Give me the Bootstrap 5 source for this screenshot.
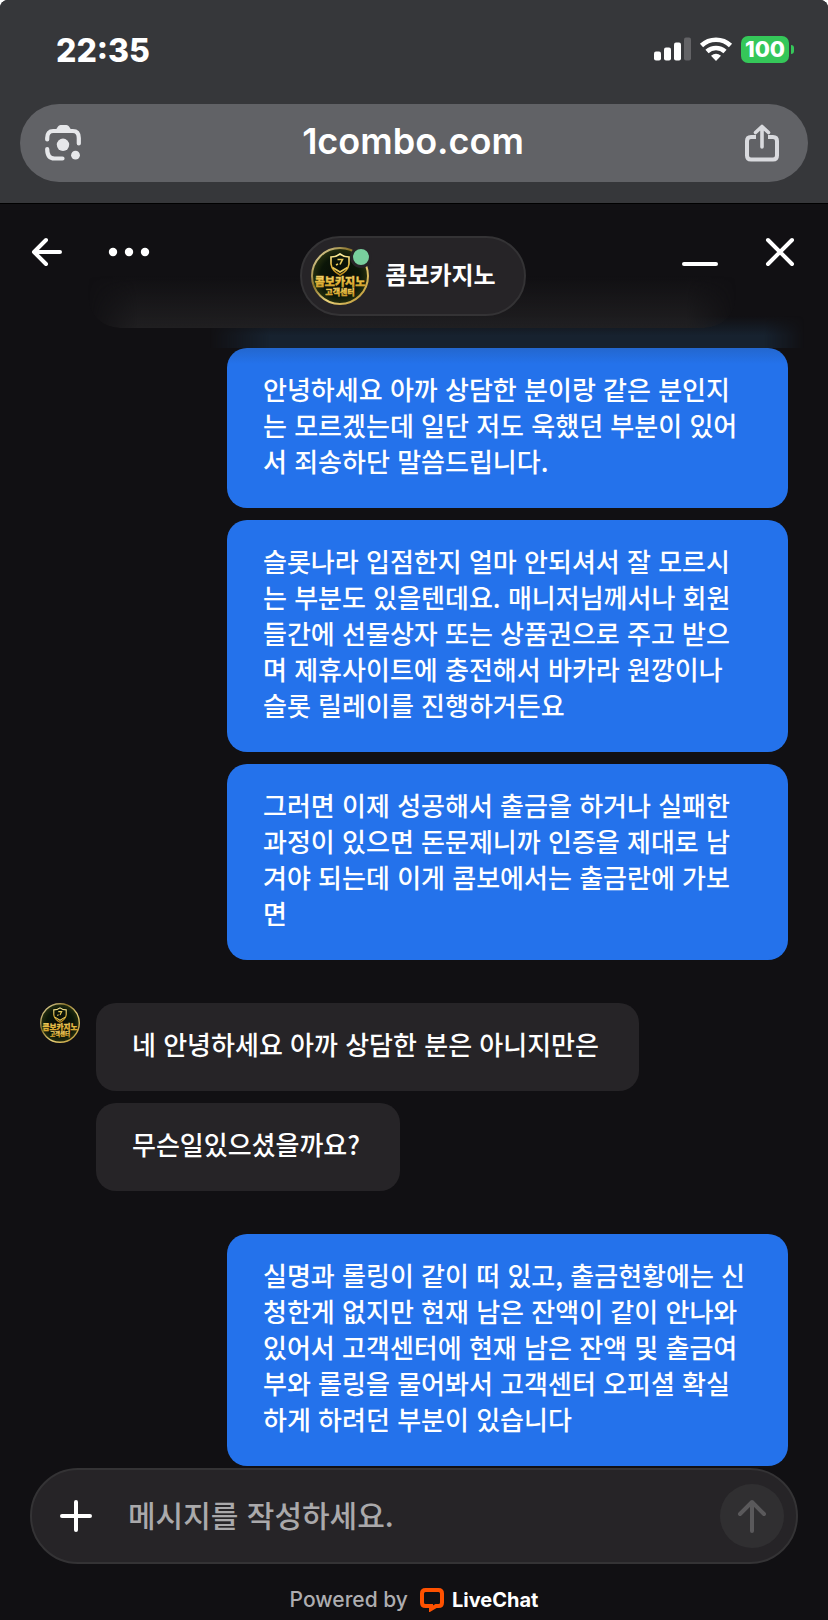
<!DOCTYPE html>
<html lang="ko">
<head>
<meta charset="utf-8">
<meta name="viewport" content="width=device-width, initial-scale=1">
<title>콤보카지노 상담</title>
<link href="https://cdn.jsdelivr.net/npm/bootstrap@5.3.0/dist/css/bootstrap.min.css" rel="stylesheet">
<script src="https://cdn.jsdelivr.net/npm/bootstrap@5.3.0/dist/js/bootstrap.bundle.min.js" defer></script>
<style>
  :root { --ink: #111013; --panel: #262427; --line: #343335; --chrome: #36373a; --blue: #2472eb; }
  body { background: #fff; color: #fff; font-family: "Noto Sans CJK KR", "Noto Sans", sans-serif; }
  .screen { background: var(--ink); border-radius: 8px 8px 0 0; overflow: hidden; }
  .latin { font-family: Inter, "Noto Sans CJK KR", sans-serif; }
  .icon-btn { padding: 0; border: 0; background: none; color: inherit; display: flex; }
  svg { display: block; flex: none; }

  .browser-bar { background: var(--chrome); border-bottom: 1px solid #000; padding: 0 20px 21px; }
  .status-row { height: 104px; padding: 0 14px 6px 36px; }
  .clock { font-size: 32px; font-weight: 800; line-height: 40px; padding-top: 4px; }
  .battery { background: #35c759; border-radius: 7px; width: 48px; height: 27px; font-size: 22px; font-weight: 800; line-height: 27px; text-align: center; }
  .battery-tip { width: 3px; height: 9px; background: #35c759; border-radius: 0 4px 4px 0; margin-left: 2px; }
  .address { background: #616266; height: 78px; border-radius: 39px; padding: 0 28px 0 24px; }
  .address-url { color: #fff; font-size: 36px; font-weight: 600; line-height: 44px; padding-bottom: 4px; }

  .chat-head { height: 144px; padding: 32px 32px 0 30px; isolation: isolate; display: grid; grid-template-columns: 1fr auto 1fr; align-items: start; }
  .head-tools { height: 32px; gap: 46px; }
  .agent-pill { background: var(--panel); border: 2px solid var(--line); border-radius: 40px; height: 80px; padding: 0 28px 0 9px; gap: 16px; }
  .agent-name { font-size: 24px; font-weight: 700; line-height: 36px; padding-bottom: 4px; }
  .presence { top: -1px; right: -3px; width: 22px; height: 22px; border: 3px solid var(--panel); border-radius: 50%; background: #78cf9d; }
  .faded-bubble { z-index: -1; left: 88px; right: 92px; bottom: 20px; height: 52px; border-radius: 0 0 32px 32px; background: linear-gradient(transparent, #201f21);
    -webkit-mask-image: linear-gradient(90deg, transparent, #000 50px, #000 calc(100% - 50px), transparent); mask-image: linear-gradient(90deg, transparent, #000 50px, #000 calc(100% - 50px), transparent); }
  .blue-haze { z-index: -2; left: 210px; right: 24px; bottom: 0; height: 32px; background: linear-gradient(transparent, #17222f 60%);
    -webkit-mask-image: linear-gradient(90deg, transparent, #000 60px, #000 calc(100% - 40px), transparent); mask-image: linear-gradient(90deg, transparent, #000 60px, #000 calc(100% - 40px), transparent); }

  .thread { padding: 0 40px 2px; gap: 43px; }
  .turn { gap: 12px; }
  .bubble { border-radius: 20px; padding: 23px 40px 29px 36px; font-size: 26px; font-weight: 500; line-height: 36px; word-break: break-all; }
  .bubble-out { background: var(--blue); width: 75%; }
  .bubble-first { background: linear-gradient(#2367cf, var(--blue) 16px); }
  .bubble-in { background: var(--panel); }

  .composer { margin: 0 30px; background: var(--panel); border: 2px solid var(--line); border-radius: 48px; height: 96px; padding: 0 12px 0 28px; }
  .composer-input { background: none; border: 0; outline: 0; color: #fff; font-size: 30px; font-weight: 500; line-height: 44px; padding: 0 0 4px; margin: 0 24px 0 36px; min-width: 0; }
  .composer-input::placeholder { color: #aaa9ab; opacity: 1; }
  .send-btn { width: 64px; height: 64px; border-radius: 50%; background: #302f31; color: #5a595b; align-items: center; justify-content: center; }
  .powered { height: 56px; padding-top: 16px; gap: 12px; color: #aeadb0; font-size: 21px; font-weight: 500; line-height: 24px; }
  .powered-brand { color: #fff; text-decoration: none; gap: 8px; font-size: 20px; font-weight: 700; }
</style>
</head>
<body>
<svg width="0" height="0" class="position-absolute" aria-hidden="true">
  <defs>
    <linearGradient id="gold" x1="0" y1="0" x2="0" y2="1"><stop offset="0" stop-color="#fff0a0"/><stop offset=".55" stop-color="#e5b83c"/><stop offset="1" stop-color="#b98518"/></linearGradient>
    <linearGradient id="ring" x1="0" y1="0" x2="1" y2="1"><stop offset="0" stop-color="#f7edb9"/><stop offset=".35" stop-color="#8a7229"/><stop offset=".6" stop-color="#e9d27c"/><stop offset="1" stop-color="#b58d28"/></linearGradient>
    <radialGradient id="felt"><stop offset="0" stop-color="#080b06"/><stop offset=".7" stop-color="#0b1608"/><stop offset="1" stop-color="#26300f"/></radialGradient>
    <symbol id="crest" viewBox="0 0 58 58">
      <circle cx="29" cy="29" r="28" fill="url(#felt)" stroke="url(#ring)" stroke-width="2"/>
      <path d="M29 7 Q33 10 38 10 V17 Q37 24 29 28 Q21 24 20 17 V10 Q25 10 29 7Z" fill="none" stroke="url(#gold)" stroke-width="1.6"/>
      <path d="M21.500 20.500l7.500 4.500 7.500-4.500M26.500 12.500l5 0-2.500 5M25 18l2-1" fill="none" stroke="#e8ca59" stroke-width="1.6"/>
      <text x="29" y="39" text-anchor="middle" font-size="11" font-weight="900" fill="url(#gold)" stroke="#e5b83c" stroke-width=".4">콤보카지노</text>
      <text x="29" y="48" text-anchor="middle" font-size="8" font-weight="900" fill="url(#gold)" stroke="#e5b83c" stroke-width=".3">고객센터</text>
    </symbol>
  </defs>
</svg>

<div class="screen min-vh-100 d-flex flex-column">
  <header class="browser-bar latin">
    <div class="status-row d-flex align-items-center justify-content-between">
      <span class="clock">22:35</span>
      <div class="d-flex align-items-center">
        <svg width="37" height="24" viewBox="0 0 37 24" fill="#fff" aria-hidden="true"><rect y="14.5" width="7" height="9" rx="2"/><rect x="10" y="10.500" width="7" height="13" rx="2"/><rect x="20" y="5.500" width="7" height="18" rx="2"/><rect x="30" y=".5" width="7" height="23" rx="2" fill="#636366"/></svg>
        <svg class="ms-2 me-1" width="34" height="26" viewBox="0 0 34 26" aria-hidden="true"><g fill="none" stroke="#fff" stroke-width="4.600"><path d="M2.500 9.500C10.500 1.800 23.500 1.800 31.500 9.500"/><path d="M8 15.500C13 10.800 21 10.800 26 15.500"/></g><path d="M17 25l-5-5.200q5-4 10 0z" fill="#fff"/></svg>
        <span class="battery ms-1">100</span><span class="battery-tip"></span>
      </div>
    </div>
    <div class="address d-flex align-items-center justify-content-between">
      <button class="icon-btn" type="button" aria-label="렌즈 검색">
        <svg width="38" height="38" viewBox="0 0 38 38"><g fill="none" stroke="#e6e7ea" stroke-width="4.200" stroke-linecap="round"><path d="M3.200 15.500V14Q3.200 7 9.200 7H28.800Q34.800 7 34.800 14V19.500"/><path d="M3.200 25Q3.200 34.500 10.500 34.500H18.500"/></g><path d="M11 7l3-4.500q.8-1.500 2.500-1.500h6q1.700 0 2.500 1.500l3 4.500z" fill="#e6e7ea"/><circle cx="19" cy="20.800" r="6.200" fill="#e6e7ea"/><circle cx="31.500" cy="31.200" r="4.400" fill="#e6e7ea"/></svg>
      </button>
      <span class="address-url">1combo.com</span>
      <button class="icon-btn" type="button" aria-label="공유">
        <svg width="36" height="38" viewBox="0 0 36 38" fill="none" stroke="#d9dade" stroke-width="4" stroke-linecap="round" stroke-linejoin="round"><path d="M12 13H7Q3 13 3 17V31.500Q3 35.500 7 35.500H29Q33 35.500 33 31.500V17Q33 13 29 13H24" stroke-linecap="butt"/><path d="M18 23V3M11.500 8.500L18 2.500L24.500 8.500" stroke-width="3.600"/></svg>
      </button>
    </div>
  </header>

  <section class="chat-head position-relative">
    <div class="faded-bubble position-absolute"></div>
    <div class="blue-haze position-absolute"></div>
    <div class="head-tools d-flex align-items-center">
      <button class="icon-btn" type="button" aria-label="뒤로">
        <svg width="32" height="32" viewBox="0 0 32 32" fill="none" stroke="#fff" stroke-width="4" stroke-linecap="round" stroke-linejoin="round"><path d="M30 16H4M16 4L4 16l12 12"/></svg>
      </button>
      <button class="icon-btn" type="button" aria-label="메뉴">
        <svg width="42" height="32" viewBox="0 0 42 32" fill="#fff"><circle cx="5" cy="16" r="4.200"/><circle cx="21" cy="16" r="4.200"/><circle cx="37" cy="16" r="4.200"/></svg>
      </button>
    </div>
    <div class="agent-pill d-flex align-items-center">
      <div class="position-relative">
        <svg width="58" height="58" role="img" aria-label="콤보카지노"><use href="#crest"/></svg>
        <span class="presence position-absolute"></span>
      </div>
      <span class="agent-name">콤보카지노</span>
    </div>
    <div class="head-tools d-flex align-items-center justify-content-end">
      <button class="icon-btn" type="button" aria-label="최소화">
        <svg width="36" height="32" viewBox="0 0 36 32" fill="none" stroke="#fff" stroke-width="4" stroke-linecap="round"><path d="M2 28h32"/></svg>
      </button>
      <button class="icon-btn" type="button" aria-label="닫기">
        <svg width="32" height="32" viewBox="0 0 32 32" fill="none" stroke="#fff" stroke-width="4" stroke-linecap="round"><path d="M4 4l24 24M28 4L4 28"/></svg>
      </button>
    </div>
  </section>

  <main class="thread d-flex flex-column flex-grow-1">
    <div class="turn d-flex flex-column align-items-end">
      <div class="bubble bubble-out bubble-first">안녕하세요 아까 상담한 분이랑 같은 분인지는 모르겠는데 일단 저도 욱했던 부분이 있어서 죄송하단 말씀드립니다.</div>
      <div class="bubble bubble-out">슬롯나라 입점한지 얼마 안되셔서 잘 모르시는 부분도 있을텐데요. 매니저님께서나 회원들간에 선물상자 또는 상품권으로 주고 받으며 제휴사이트에 충전해서 바카라 원깡이나 슬롯 릴레이를 진행하거든요</div>
      <div class="bubble bubble-out">그러면 이제 성공해서 출금을 하거나 실패한 과정이 있으면 돈문제니까 인증을 제대로 남겨야 되는데 이게 콤보에서는 출금란에 가보면</div>
    </div>
    <div class="d-flex align-items-start gap-3">
      <svg width="40" height="40" role="img" aria-label="콤보카지노"><use href="#crest"/></svg>
      <div class="turn d-flex flex-column align-items-start">
        <div class="bubble bubble-in">네 안녕하세요 아까 상담한 분은 아니지만은</div>
        <div class="bubble bubble-in">무슨일있으셨을까요?</div>
      </div>
    </div>
    <div class="turn d-flex flex-column align-items-end">
      <div class="bubble bubble-out">실명과 롤링이 같이 떠 있고, 출금현황에는 신청한게 없지만 현재 남은 잔액이 같이 안나와 있어서 고객센터에 현재 남은 잔액 및 출금여부와 롤링을 물어봐서 고객센터 오피셜 확실하게 하려던 부분이 있습니다</div>
    </div>
  </main>

  <footer>
    <form class="composer d-flex align-items-center">
      <button class="icon-btn" type="button" aria-label="첨부">
        <svg width="32" height="32" viewBox="0 0 32 32" fill="none" stroke="#fff" stroke-width="4" stroke-linecap="round"><path d="M16 2v28M2 16h28"/></svg>
      </button>
      <input class="composer-input flex-grow-1" type="text" aria-label="메시지" placeholder="메시지를 작성하세요.">
      <button class="icon-btn send-btn" type="submit" aria-label="보내기">
        <svg width="32" height="36" viewBox="0 0 32 36" fill="none" stroke="currentColor" stroke-width="4" stroke-linecap="round" stroke-linejoin="round"><path d="M16 33V4M4 16L16 4l12 12"/></svg>
      </button>
    </form>
    <div class="powered latin d-flex justify-content-center align-items-center">
      <span>Powered by</span>
      <a class="powered-brand d-flex align-items-center" href="#">
        <svg width="24" height="24" viewBox="0 0 24 24"><path d="M5.500 2H18.500Q22 2 22 5.500V14.500Q22 18 18.500 18H16L11 21V18H5.500Q2 18 2 14.500V5.500Q2 2 5.500 2Z" fill="none" stroke="#ff5100" stroke-width="4"/></svg>
        <span>LiveChat</span>
      </a>
    </div>
  </footer>
</div>
</body>
</html>
